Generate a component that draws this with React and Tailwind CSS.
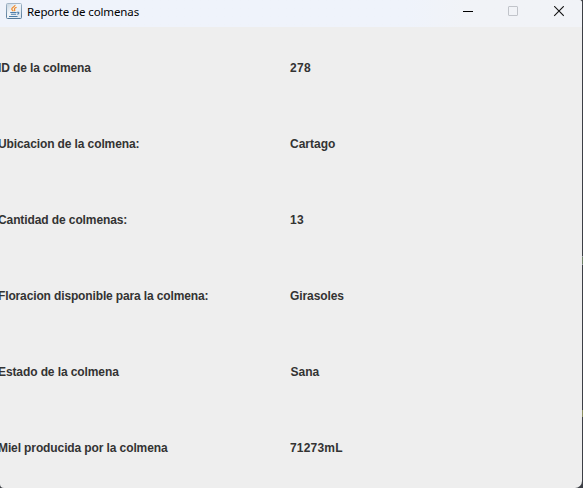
const rows = [
  { label: 'ID de la colmena', value: '278', labelClass: 'tracking-[-0.12px]', valueClass: 'tracking-[0.3px]' },
  { label: 'Ubicacion de la colmena:', value: 'Cartago', labelClass: 'tracking-[-0.11px]', valueClass: '' },
  { label: 'Cantidad de colmenas:', value: '13', labelClass: 'tracking-[-0.1px]', valueClass: 'tracking-[0.3px]' },
  { label: 'Floracion disponible para la colmena:', value: 'Girasoles', labelClass: 'tracking-[-0.135px]', valueClass: 'tracking-[-0.09px]' },
  { label: 'Estado de la colmena', value: 'Sana', labelClass: 'tracking-[-0.1px]', valueClass: 'pl-[0.5px]' },
  { label: 'Miel producida por la colmena', value: '71273mL', labelClass: 'tracking-[-0.11px]', valueClass: 'tracking-[0.2px]' },
];

function JavaIcon() {
  return (
    <svg width="16" height="16" viewBox="0 0 16 16" fill="none" className="shrink-0">
      <defs>
        <linearGradient id="tile" x1="0" y1="0" x2="1" y2="1">
          <stop offset="0" stopColor="#c3d2df" />
          <stop offset="0.4" stopColor="#f1f5f9" />
          <stop offset="1" stopColor="#dce6ee" />
        </linearGradient>
        <linearGradient id="frame" x1="0" y1="0" x2="0" y2="1">
          <stop offset="0" stopColor="#a3b6c7" />
          <stop offset="1" stopColor="#557a99" />
        </linearGradient>
      </defs>
      <rect x="0.5" y="0.5" width="15" height="15" rx="1" fill="url(#tile)" stroke="url(#frame)" />
      <path d="M9 2c.4 1.700-3.200 2.200-3.200 4 0 1 1.100 1.400 1.500 2.300M10.600 4.400c-1.800.5-2.700 1.300-2 2.200.4.600.2 1-.3 1.500" stroke="#ee8a2c" strokeWidth="1.3" />
      <path d="M4.200 9.500h6.400M4.900 11.200h5.200M3 13.500h8.500M11 9.300c2.600-.5 2.300 1.500.2 2" stroke="#4d7da8" strokeWidth="1.1" />
    </svg>
  );
}

function TitleBar() {
  return (
    <header className="flex h-[27px] shrink-0 items-start bg-linear-to-r from-[#eff3fb] from-70% to-[#f1f3f7] to-80% pl-[6px] pt-[3px]">
      <JavaIcon />
      <h1 className="ml-[5px] mt-px whitespace-nowrap font-['Noto_Sans',sans-serif] text-[11.5px] leading-[16px] tracking-[-0.12px] text-black">
        Reporte de colmenas
      </h1>
      <div className="ml-auto flex">
        <button aria-label="Minimizar" className="flex h-[17px] w-[45px] items-center justify-center">
          <svg width="11" height="11" viewBox="0 0 11 11">
            <path d="M1 5.500h10" stroke="#000" shapeRendering="crispEdges" />
          </svg>
        </button>
        <button aria-label="Maximizar" disabled className="flex h-[17px] w-[45px] items-center justify-center">
          <svg width="11" height="11" viewBox="0 0 11 11">
            <rect x="1.500" y="0.500" width="9" height="9" rx="0.500" fill="none" stroke="#c1c4ca" />
          </svg>
        </button>
        <button aria-label="Cerrar" className="flex h-[17px] w-[47px] items-center justify-center">
          <svg width="11" height="11" viewBox="0 0 11 11">
            <path d="M1.200 0.200l9.600 9.600M10.800 0.200l-9.600 9.600" stroke="#111" strokeWidth="1.100" />
          </svg>
        </button>
      </div>
    </header>
  );
}

export default function App() {
  return (
    <div className="relative h-[488px] w-[583px] overflow-hidden bg-[#3c3f45] pr-px">
      <div className="flex h-full flex-col overflow-hidden rounded-br-[7px] rounded-bl-[4px] rounded-tr-[3px] bg-[#eeeeee]">
        <TitleBar />
        <dl className="flex flex-col pt-[3px] font-['Liberation_Sans',Arial,sans-serif] text-[12px] font-bold leading-[14px] text-[#333333]">
          {rows.map(({ label, value, labelClass, valueClass }) => (
            <div key={label} className="grid h-[76px] grid-cols-[291px_291px] items-center">
              <dt className={`-ml-[2px] whitespace-nowrap ${labelClass}`}>{label}</dt>
              <dd className={`-ml-px whitespace-nowrap ${valueClass}`}>{value}</dd>
            </div>
          ))}
        </dl>
      </div>
      <span className="absolute right-0 top-[256px] h-[9px] w-px border-y border-[#8d959e] bg-[#6d8065]" />
      <span className="absolute right-0 top-[410px] h-[7px] w-px bg-[#8c8f63]" />
    </div>
  );
}
